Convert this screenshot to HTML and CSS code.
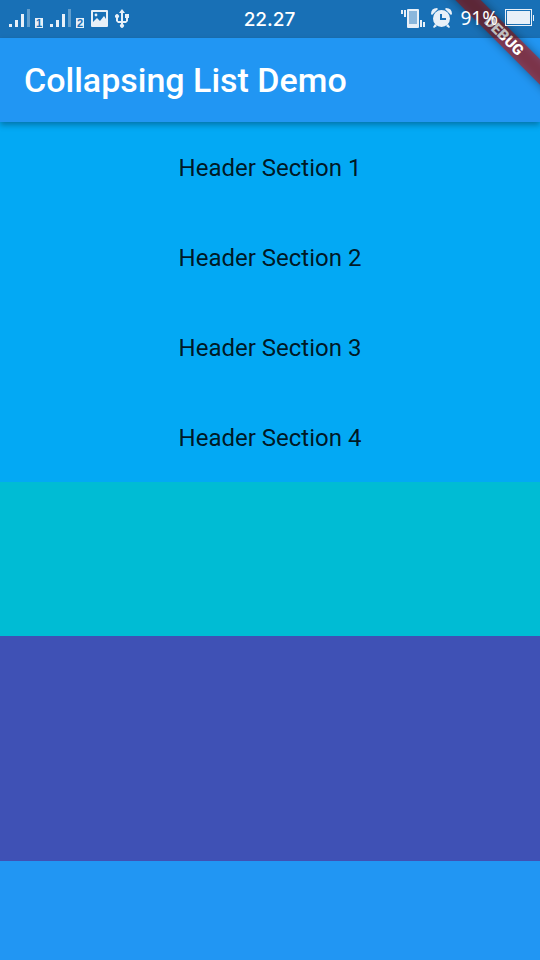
FILE: index.html
```html
<!DOCTYPE html>
<html lang="en">
<head>
<meta charset="utf-8">
<meta name="viewport" content="width=device-width, initial-scale=1">
<title>Collapsing List Demo</title>
<link rel="stylesheet" href="styles.css">
</head>
<body>
<div class="screen">
  <div class="status">
    <div class="status-group">
      <svg class="signal" width="21" height="18" viewBox="0 0 21 18" aria-hidden="true"><path d="M0 15h3v3H0zM6 11h3v7H6zM12 5h3v13h-3z"/><path class="faint" d="M18 0h3v18h-3z"/></svg>
      <span class="sim">1</span>
      <svg class="signal" width="21" height="18" viewBox="0 0 21 18" aria-hidden="true"><path d="M0 15h3v3H0zM6 11h3v7H6zM12 5h3v13h-3z"/><path class="faint" d="M18 0h3v18h-3z"/></svg>
      <span class="sim">2</span>
      <svg class="picture" width="17" height="17" viewBox="0 0 17 17" aria-hidden="true"><path fill-rule="evenodd" d="M1 0h15q1 0 1 1v15q0 1-1 1H1q-1 0-1-1V1q0-1 1-1zM2 2v10l4-4 3 3 4-5 2 3V2z"/><circle cx="5" cy="5" r="1.4"/></svg>
      <svg class="usb" width="14" height="19" viewBox="0 0 14 19" aria-hidden="true"><path d="M7 0l3 4H8v8h3V9h-1V5h4v4h-1v3l-2 2H8v1a2 2 0 1 1-2 0v-1H3l-2-2V9A2 2 0 1 1 3 9v3h3V4H4z"/></svg>
    </div>
    <time class="clock">22.27</time>
    <div class="status-group status-end">
      <svg class="vibrate" width="24" height="20" viewBox="0 0 24 20" aria-hidden="true"><path d="M0 2h2v4H0zM3 2h2v7H3zM19 12h2v7h-2zM22 14h2v5h-2z"/><rect x="6" y="1" width="12" height="19" rx="1"/><path class="glass" d="M8 3h8v13H8z"/></svg>
      <svg class="alarm" width="21" height="20" viewBox="0 0 21 20" aria-hidden="true"><path d="M0 6Q0 0 6 0l1 1-6 6zM21 6q0-6-6-6l-1 1 6 6z"/><path d="M4 16l-2 3 1 1 3-2zM17 16l2 3-1 1-3-2z"/><circle cx="10.500" cy="10.500" r="8.500"/><path class="hands" d="M10 6v5h5"/></svg>
      <span class="percent">91%</span>
      <svg class="battery" width="29" height="18" viewBox="0 0 29 18" aria-hidden="true"><rect class="case" x=".5" y=".5" width="26" height="16"/><path d="M2 2h23v13H2zM28 6h1v6h-1z"/></svg>
    </div>
  </div>
  <header class="app-bar"><h1>Collapsing List Demo</h1></header>
  <main class="list">
    <section class="row">Header Section 1</section>
    <section class="row">Header Section 2</section>
    <section class="row">Header Section 3</section>
    <section class="row">Header Section 4</section>
    <section class="block cyan"></section>
    <section class="block indigo"></section>
    <section class="block blue"></section>
  </main>
  <div class="corner"><div class="ribbon">DEBUG</div></div>
</div>
</body>
</html>
```
FILE: styles.css
```css
* { box-sizing: border-box; }
body { margin: 0; font-family: Roboto, "Liberation Sans", sans-serif; }
svg { display: block; flex: none; fill: #e8f0f8; }
.screen {
  position: relative;
  display: flex;
  flex-direction: column;
  min-height: 100vh;
  overflow: hidden;
  background: #2196f3;
}
.status {
  position: relative;
  z-index: 3;
  display: grid;
  grid-template-columns: 1fr auto 1fr;
  align-items: center;
  height: 38px;
  padding: 0 6px 2px 9px;
  background: rgba(0, 0, 0, .25);
  color: #fff;
}
.status-group { display: flex; align-items: center; }
.status-end { justify-content: flex-end; }
.faint { opacity: .35; }
.sim {
  align-self: flex-end;
  width: 8px;
  height: 10px;
  margin: 0 7px 0 5px;
  background: #e8f0f8;
  color: #1970b6;
  font: 700 11px/10px "Liberation Sans", sans-serif;
  text-align: center;
}
.usb { margin-left: 7px; }
.clock { padding: 4px 4px 0 0; font: 500 19px/24px Inter, sans-serif; }
.glass { fill: #8bb7dc; }
.alarm { margin: 0 8px 0 6px; }
.hands { fill: none; stroke: #1970b6; stroke-width: 2; }
.percent { font: 400 19px/24px "Noto Sans", sans-serif; }
.battery { margin-left: 7px; }
.case { fill: none; stroke: #e8f0f8; }
.app-bar {
  position: relative;
  z-index: 1;
  display: flex;
  align-items: center;
  height: 84px;
  padding: 0 24px;
  background: #2196f3;
  box-shadow: 0 3px 6px rgba(0, 0, 0, .3);
}
h1 {
  margin: 0;
  color: #fff;
  font-size: 34px;
  font-weight: 500;
  line-height: 40px;
}
.list { display: flex; flex: 1; flex-direction: column; }
.row {
  display: flex;
  align-items: center;
  justify-content: center;
  height: 90px;
  padding-top: 2px;
  background: #03a9f4;
  color: rgba(0, 0, 0, .87);
  font-size: 24px;
  line-height: 28px;
}
.cyan { height: 154px; background: #00bcd4; }
.indigo { height: 225px; background: #3f51b5; }
.blue { flex: 1; background: #2196f3; }
.corner {
  position: absolute;
  top: 0;
  right: 0;
  z-index: 2;
  width: 120px;
  height: 120px;
  overflow: hidden;
  pointer-events: none;
}
.ribbon {
  position: absolute;
  top: 27px;
  right: -64px;
  width: 200px;
  height: 18px;
  transform: rotate(45deg);
  color: #fff;
  font-size: 15px;
  font-weight: 900;
  line-height: 18px;
  text-align: center;
}
.ribbon::before,
.ribbon::after {
  content: "";
  position: absolute;
  inset: 0;
}
.ribbon::before {
  z-index: -2;
  background: rgba(0, 0, 0, .4);
  filter: blur(5px);
}
.ribbon::after {
  z-index: -1;
  background: rgba(183, 28, 28, .63);
}
```
